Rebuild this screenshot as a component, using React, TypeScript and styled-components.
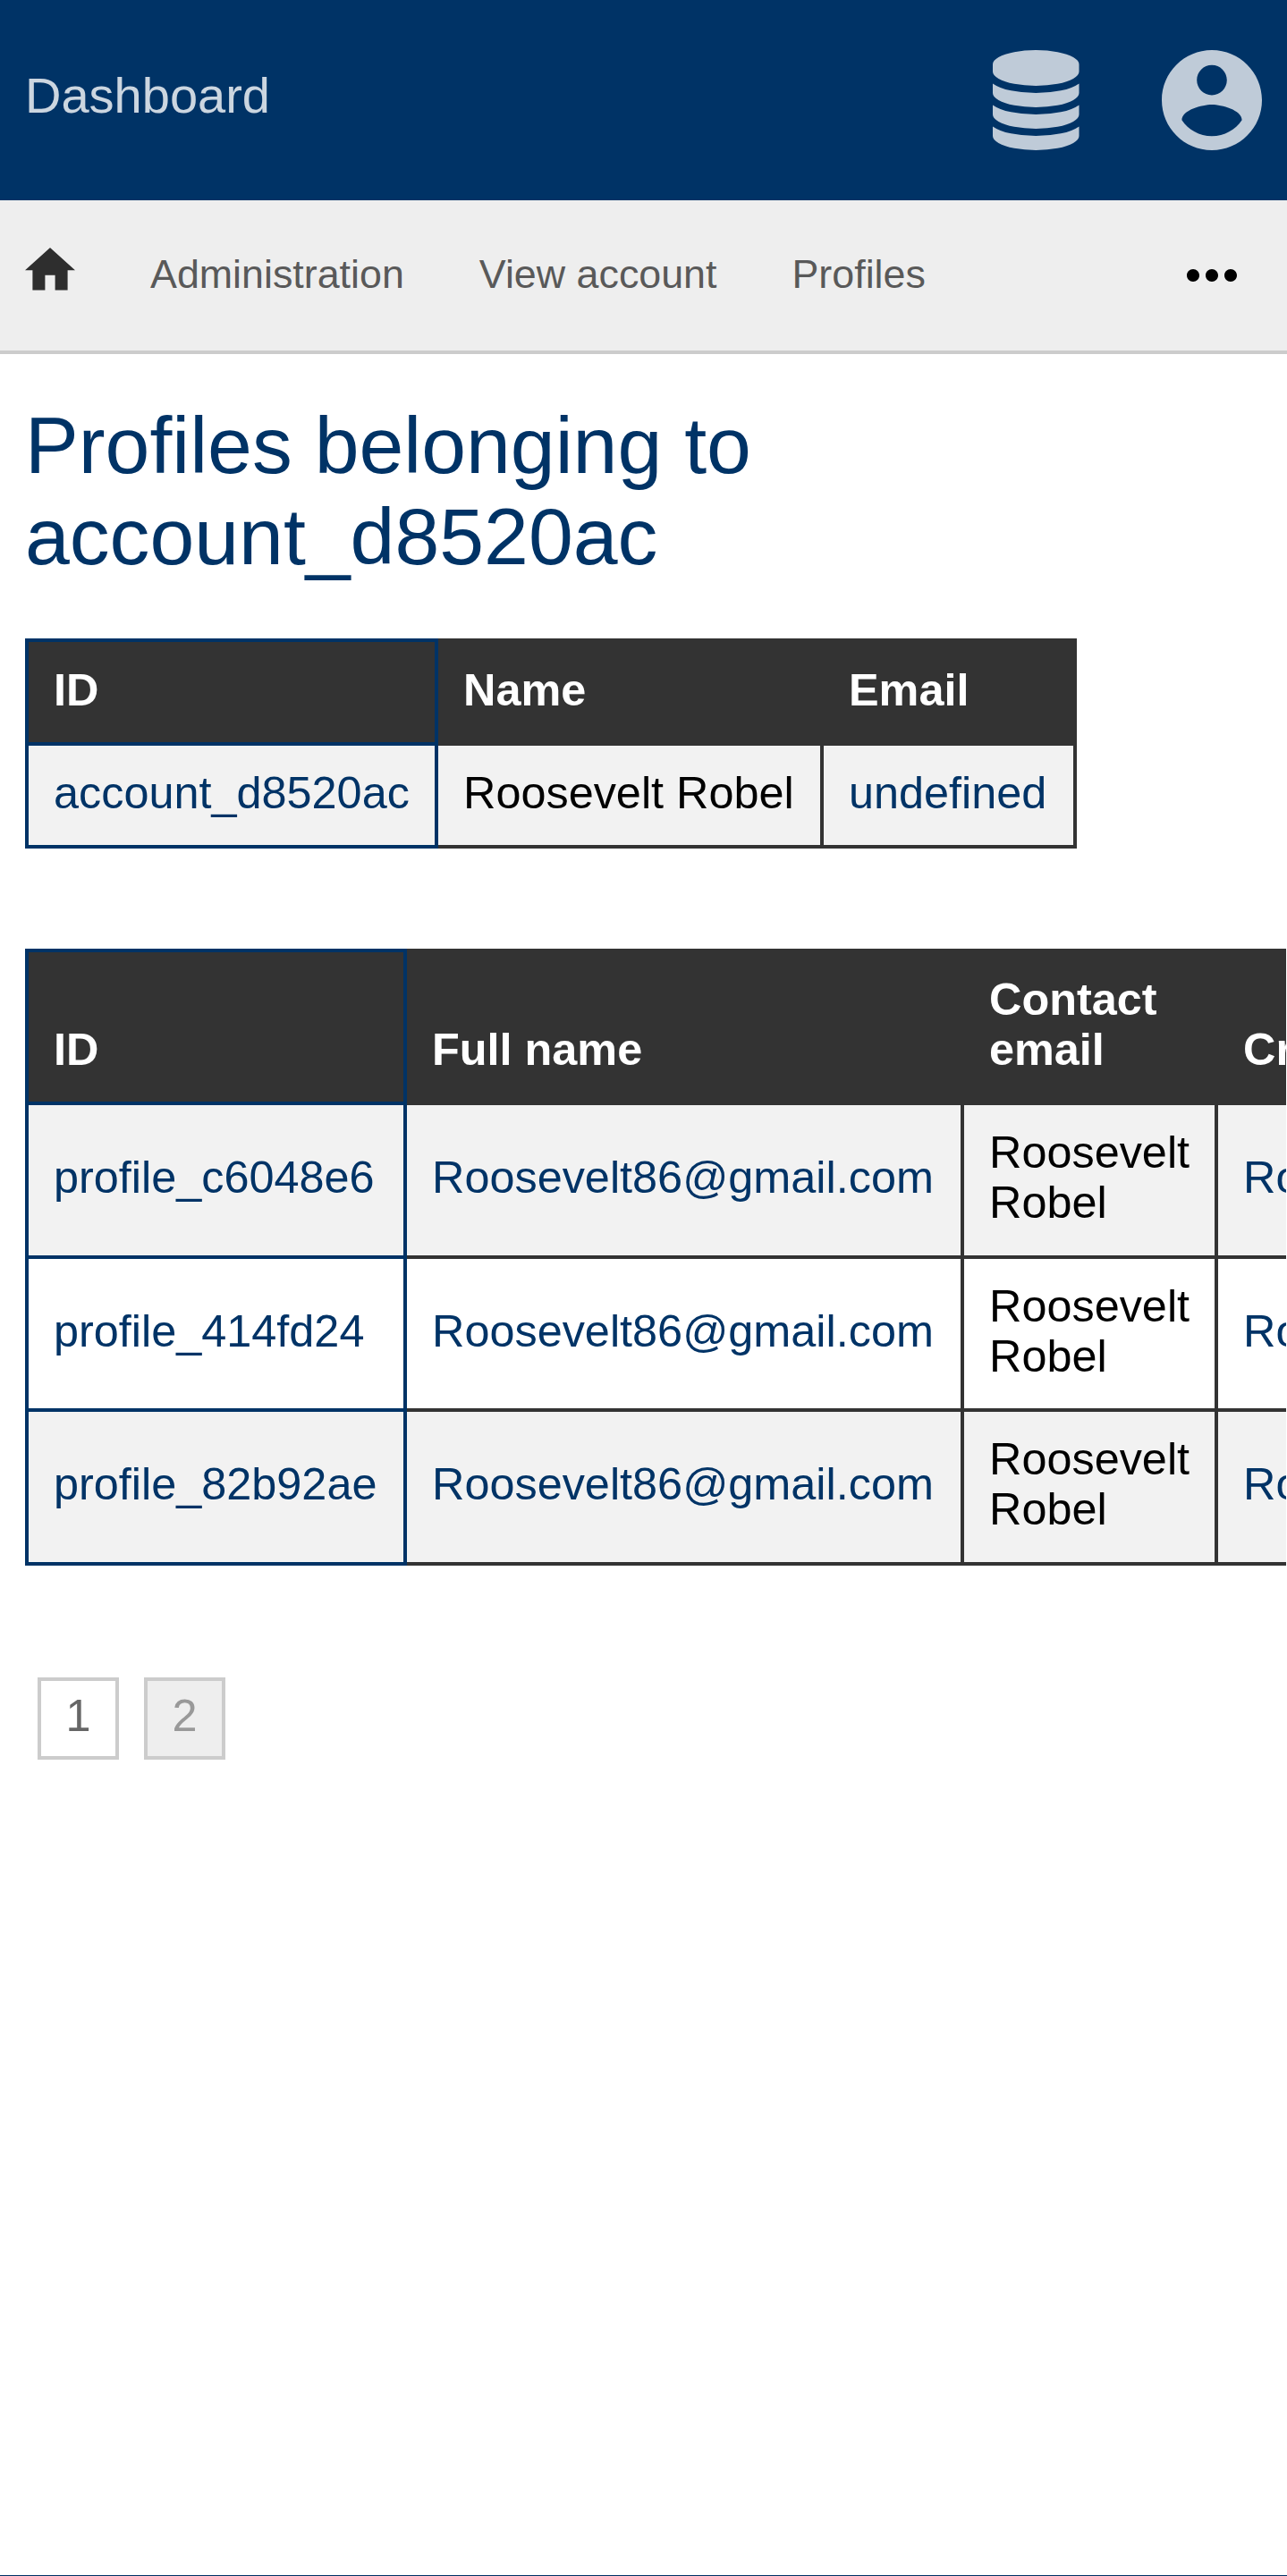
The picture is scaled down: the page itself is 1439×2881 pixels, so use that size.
import React from "react";
import styled, { createGlobalStyle } from "styled-components";

const NAVY = "#003366";
const DARK = "#333333";

const GlobalStyle = createGlobalStyle`
  html, body { margin: 0; padding: 0; background: #fff; }
  body {
    font-family: "Liberation Sans", Arial, Helvetica, sans-serif;
    color: #000;
    overflow: hidden;
  }
  *, *::before, *::after { box-sizing: border-box; }
`;

const Page = styled.div`
  display: flex;
  flex-direction: column;
  width: 1439px;
  height: 2881px;
  overflow: hidden;
  border-bottom: 1px solid ${NAVY};
`;

const Header = styled.header`
  display: flex;
  align-items: center;
  justify-content: space-between;
  flex: none;
  height: 224px;
  padding: 0 28.5px 0 28px;
  background: ${NAVY};
`;

const Brand = styled.a`
  padding-bottom: 10px;
  color: rgba(255, 255, 255, 0.8);
  font-size: 56px;
  line-height: 64px;
`;

const HeaderIcons = styled.div`
  display: flex;
  align-items: center;
  gap: 92px;
  color: rgba(255, 255, 255, 0.75);
`;

const Icon = styled.svg<{ $w: number; $h: number }>`
  display: block;
  flex: none;
  width: ${(p) => p.$w}px;
  height: ${(p) => p.$h}px;
  fill: currentColor;
`;

const Nav = styled.nav`
  display: flex;
  align-items: center;
  flex: none;
  height: 172px;
  padding: 0 56.5px 0 28px;
  background: #eeeeee;
  border-bottom: 4px solid #cccccc;
`;

const HomeLink = styled.a`
  margin-right: 84px;
  padding-bottom: 14px;
  color: #2e2e2e;
`;

const NavLink = styled.a`
  margin-right: 84px;
  padding-bottom: 4px;
  color: #595959;
  font-size: 44.8px;
  line-height: 52px;
  white-space: nowrap;
`;

const MoreButton = styled.a`
  margin-left: auto;
  color: #000;
`;

const Main = styled.main`
  display: flex;
  flex-direction: column;
  align-items: flex-start;
  width: 1438px;
  padding: 51px 0 0 28px;
  overflow: hidden;
`;

const Title = styled.h1`
  width: 1000px;
  margin: 0;
  color: ${NAVY};
  font-size: 89.6px;
  font-weight: 400;
  line-height: 102px;
`;

const Table = styled.table<{ $width: number; $top: number }>`
  flex: none;
  width: ${(p) => p.$width}px;
  margin-top: ${(p) => p.$top}px;
  border-collapse: collapse;
  table-layout: fixed;
  font-size: 50.4px;
  line-height: 56px;
`;

const Column = styled.col<{ $width: number }>`
  width: ${(p) => p.$width}px;
`;

const Row = styled.tr<{ $height: number; $shaded?: boolean }>`
  height: ${(p) => p.$height}px;
  background: ${(p) => (p.$shaded ? "#f2f2f2" : "#ffffff")};
`;

const HeadCell = styled.th`
  padding: 0 27px 30.5px 28px;
  border: 4px solid ${DARK};
  background: ${DARK};
  color: #fff;
  font-weight: 700;
  text-align: left;
  vertical-align: bottom;
  &:first-child { border-color: ${NAVY}; }
`;

const Cell = styled.td<{ $link?: boolean }>`
  padding: 0 0 6px 28px;
  border: 4px solid ${DARK};
  color: ${(p) => (p.$link ? NAVY : "#000")};
  vertical-align: middle;
  &:first-child { border-color: ${NAVY}; }
`;

const Pager = styled.div`
  display: flex;
  gap: 28px;
  margin: 125px 0 0 14px;
`;

const PageButton = styled.a<{ $current?: boolean }>`
  display: flex;
  justify-content: center;
  width: 91px;
  height: 92px;
  padding-top: 11px;
  border: 4px solid #cccccc;
  background: ${(p) => (p.$current ? "#eeeeee" : "#ffffff")};
  color: ${(p) => (p.$current ? "#999999" : "#666666")};
  font-size: 50.4px;
  line-height: 56px;
`;

const profiles = ["profile_c6048e6", "profile_414fd24", "profile_82b92ae"];
const rowHeights = [172, 171, 172];

export default function App() {
  return (
    <>
      <GlobalStyle />
      <Page>
        <Header>
          <Brand>Dashboard</Brand>
          <HeaderIcons>
            <Icon $w={96.5} $h={112} viewBox="0 0 1536 1792" preserveAspectRatio="none">
              <path d="M768 768q237 0 443-43t325-127v170q0 69-103 128t-280 93.5-385 34.5-385-34.5-280-93.5-103-128v-170q119 84 325 127t443 43zm0 768q237 0 443-43t325-127v170q0 69-103 128t-280 93.5-385 34.5-385-34.5-280-93.5-103-128v-170q119 84 325 127t443 43zm0-384q237 0 443-43t325-127v170q0 69-103 128t-280 93.5-385 34.5-385-34.5-280-93.5-103-128v-170q119 84 325 127t443 43zm0-1152q208 0 385 34.5t280 93.5 103 128v128q0 69-103 128t-280 93.5-385 34.5-385-34.5-280-93.5-103-128v-128q0-69 103-128t280-93.5 385-34.5z" />
            </Icon>
            <Icon $w={112} $h={112} viewBox="2 2 20 20">
              <path d="M12 2C6.48 2 2 6.48 2 12s4.48 10 10 10 10-4.48 10-10S17.52 2 12 2zm0 3c1.66 0 3 1.34 3 3s-1.34 3-3 3-3-1.34-3-3 1.34-3 3-3zm0 14.2c-2.5 0-4.71-1.28-6-3.22.03-1.99 4-3.08 6-3.08 1.99 0 5.97 1.09 6 3.08-1.29 1.94-3.5 3.22-6 3.22z" />
            </Icon>
          </HeaderIcons>
        </Header>
        <Nav>
          <HomeLink>
            <Icon $w={56} $h={47.6} viewBox="2 3 20 17">
              <path d="M10 20v-6h4v6h5v-8h3L12 3 2 12h3v8z" />
            </Icon>
          </HomeLink>
          <NavLink>Administration</NavLink>
          <NavLink>View account</NavLink>
          <NavLink>Profiles</NavLink>
          <MoreButton>
            <Icon $w={56} $h={14} viewBox="4 10 16 4">
              <path d="M6 10c-1.1 0-2 .9-2 2s.9 2 2 2 2-.9 2-2-.9-2-2-2zm12 0c-1.1 0-2 .9-2 2s.9 2 2 2 2-.9 2-2-.9-2-2-2zm-6 0c-1.1 0-2 .9-2 2s.9 2 2 2 2-.9 2-2-.9-2-2-2z" />
            </Icon>
          </MoreButton>
        </Nav>
        <Main>
          <Title>Profiles belonging to account_d8520ac</Title>
          <Table $width={1176} $top={63}>
            <colgroup>
              <Column $width={458} />
              <Column $width={431} />
              <Column $width={283} />
            </colgroup>
            <tbody>
              <Row $height={116}>
                <HeadCell>ID</HeadCell>
                <HeadCell>Name</HeadCell>
                <HeadCell>Email</HeadCell>
              </Row>
              <Row $height={115} $shaded>
                <Cell $link>account_d8520ac</Cell>
                <Cell>Roosevelt Robel</Cell>
                <Cell $link>undefined</Cell>
              </Row>
            </tbody>
          </Table>
          <Table $width={1984} $top={112}>
            <colgroup>
              <Column $width={423} />
              <Column $width={623} />
              <Column $width={284} />
              <Column $width={650} />
            </colgroup>
            <tbody>
              <Row $height={171}>
                <HeadCell>ID</HeadCell>
                <HeadCell>Full name</HeadCell>
                <HeadCell>Contact email</HeadCell>
                <HeadCell>Created</HeadCell>
              </Row>
              {profiles.map((id, i) => (
                <Row key={id} $height={rowHeights[i]} $shaded={i % 2 === 0}>
                  <Cell $link>{id}</Cell>
                  <Cell $link>Roosevelt86@gmail.com</Cell>
                  <Cell>Roosevelt Robel</Cell>
                  <Cell $link>Roosevelt86@gmail.com</Cell>
                </Row>
              ))}
            </tbody>
          </Table>
          <Pager>
            <PageButton>1</PageButton>
            <PageButton $current>2</PageButton>
          </Pager>
        </Main>
      </Page>
    </>
  );
}
